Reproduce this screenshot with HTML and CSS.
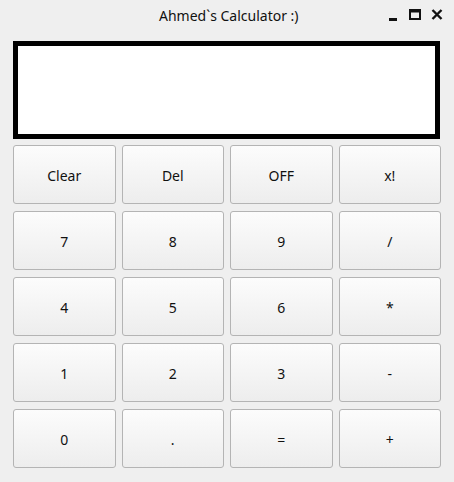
FILE: index.html
```html
<!DOCTYPE html>
<html>
<head>
<meta charset="utf-8">
<link rel="stylesheet" href="styles.css">
</head>
<body>
<div class="window">
  <div class="titlebar">
    <div class="title">Ahmed`s Calculator :)</div>
    <div class="controls">
      <svg class="ctl" width="12" height="14" viewBox="0 0 12 14"><rect x="2" y="10" width="8" height="3" fill="#111"/></svg>
      <svg class="ctl" width="12" height="14" viewBox="0 0 12 14"><rect x="1" y="2" width="10" height="9" fill="none" stroke="#111" stroke-width="2"/><rect x="1" y="2" width="10" height="2.5" fill="#111"/></svg>
      <svg class="ctl" width="12" height="14" viewBox="0 0 12 14"><path d="M1.5 2 L10.5 11 M10.5 2 L1.5 11" stroke="#111" stroke-width="2.4"/></svg>
    </div>
  </div>
  <div class="content">
    <div class="display"></div>
    <div class="keys">
      <button class="key">Clear</button>
      <button class="key">Del</button>
      <button class="key">OFF</button>
      <button class="key">x!</button>
      <button class="key">7</button>
      <button class="key">8</button>
      <button class="key">9</button>
      <button class="key">/</button>
      <button class="key">4</button>
      <button class="key">5</button>
      <button class="key">6</button>
      <button class="key">*</button>
      <button class="key">1</button>
      <button class="key">2</button>
      <button class="key">3</button>
      <button class="key">-</button>
      <button class="key">0</button>
      <button class="key">.</button>
      <button class="key">=</button>
      <button class="key">+</button>
    </div>
  </div>
</div>
</body>
</html>
```

FILE: styles.css
```css
html, body {
  margin: 0;
  padding: 0;
  background: #efefef;
  font-family: "Noto Sans", "DejaVu Sans", sans-serif;
  color: #111;
}
.window {
  width: 454px;
  height: 482px;
  display: flex;
  flex-direction: column;
}
.titlebar {
  height: 30px;
  display: flex;
  align-items: center;
}
.title {
  font-size: 14px;
  padding-left: 159px;
  flex: 1;
}
.controls {
  display: flex;
  gap: 10px;
  padding-right: 11px;
  align-items: center;
}
.ctl {
  display: block;
}
.content {
  padding: 11px 13px 0 13px;
  display: flex;
  flex-direction: column;
  gap: 6px;
}
.display {
  height: 88px;
  width: 417px;
  border: 5px solid #000;
  background: #fff;
}
.keys {
  width: 428px;
  display: grid;
  grid-template-columns: repeat(4, 1fr);
  grid-template-rows: repeat(5, 59px);
  column-gap: 6px;
  row-gap: 7px;
}
.key {
  margin: 0;
  border: 1px solid #b4b4b4;
  border-radius: 3px;
  background: linear-gradient(#fcfcfc, #ededed);
  font-family: "Noto Sans", "DejaVu Sans", sans-serif;
  font-size: 14px;
  color: #111;
  padding: 2px 0 0 0;
}
```
